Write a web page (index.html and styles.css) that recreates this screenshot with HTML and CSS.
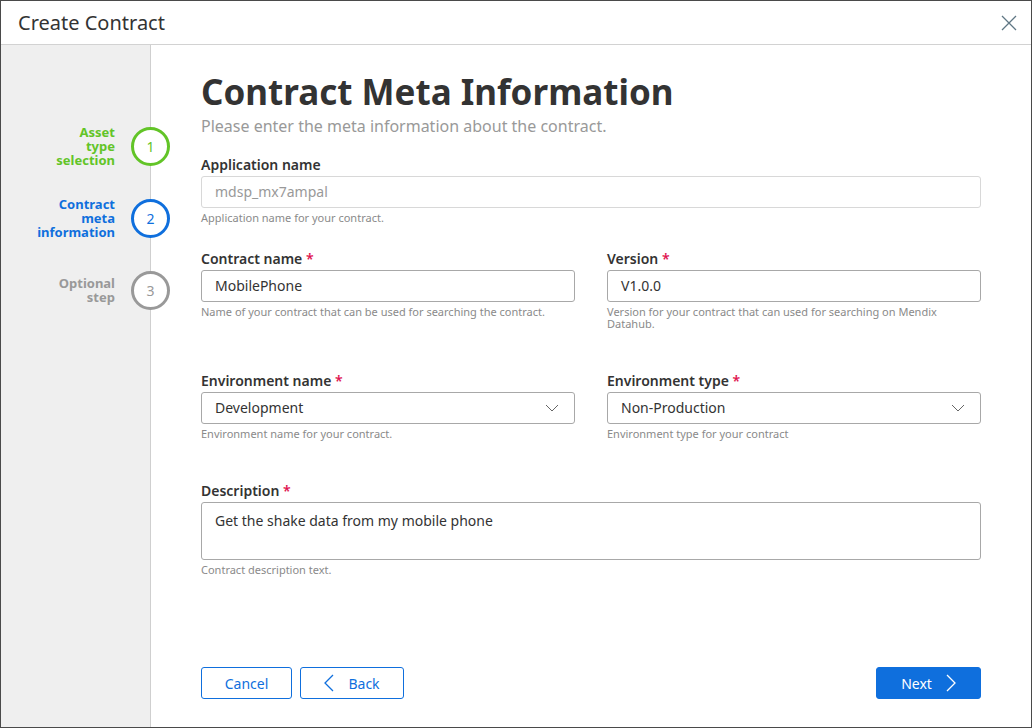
FILE: index.html
```html
<!DOCTYPE html>
<html lang="en">
<head>
<meta charset="utf-8">
<title>Create Contract</title>
<link rel="stylesheet" href="styles.css">
</head>
<body>
<div class="dialog">
  <div class="header">
    <div class="header-title">Create Contract</div>
    <svg class="close" width="16" height="16" viewBox="0 0 16 16"><path d="M1 1 L15 15 M15 1 L1 15" stroke="#5f7784" stroke-width="1.3" fill="none"/></svg>
  </div>
  <div class="body">
    <div class="sidebar">
      <div class="step done">
        <div class="step-label">Asset type selection</div>
        <div class="step-circle">1</div>
      </div>
      <div class="step active">
        <div class="step-label">Contract meta information</div>
        <div class="step-circle">2</div>
      </div>
      <div class="step todo">
        <div class="step-label">Optional step</div>
        <div class="step-circle">3</div>
      </div>
    </div>
    <div class="main">
      <h1 class="title">Contract Meta Information</h1>
      <p class="subtitle">Please enter the meta information about the contract.</p>

      <div class="field field-app">
        <label class="label">Application name</label>
        <div class="input disabled">mdsp_mx7ampal</div>
        <div class="help">Application name for your contract.</div>
      </div>

      <div class="row row-contract">
        <div class="field">
          <label class="label">Contract name <span class="req">*</span></label>
          <div class="input">MobilePhone</div>
          <div class="help">Name of your contract that can be used for searching the contract.</div>
        </div>
        <div class="field">
          <label class="label">Version <span class="req">*</span></label>
          <div class="input">V1.0.0</div>
          <div class="help">Version for your contract that can used for searching on Mendix Datahub.</div>
        </div>
      </div>

      <div class="row row-env">
        <div class="field">
          <label class="label">Environment name <span class="req">*</span></label>
          <div class="input select"><span>Development</span>
            <svg width="14" height="8" viewBox="0 0 14 8"><path d="M1 1 L7 7 L13 1" stroke="#666" stroke-width="1" fill="none"/></svg>
          </div>
          <div class="help">Environment name for your contract.</div>
        </div>
        <div class="field">
          <label class="label">Environment type <span class="req">*</span></label>
          <div class="input select"><span>Non-Production</span>
            <svg width="14" height="8" viewBox="0 0 14 8"><path d="M1 1 L7 7 L13 1" stroke="#666" stroke-width="1" fill="none"/></svg>
          </div>
          <div class="help">Environment type for your contract</div>
        </div>
      </div>

      <div class="field field-desc">
        <label class="label">Description <span class="req">*</span></label>
        <div class="input textarea">Get the shake data from my mobile phone</div>
        <div class="help">Contract description text.</div>
      </div>

      <div class="actions">
        <div class="left-actions">
          <button class="btn btn-outline btn-cancel">Cancel</button>
          <button class="btn btn-outline btn-back">
            <svg width="10" height="18" viewBox="0 0 10 18"><path d="M9 1 L1 9 L9 17" stroke="#0f6fdd" stroke-width="1.3" fill="none"/></svg>
            <span>Back</span>
          </button>
        </div>
        <button class="btn btn-primary btn-next">
          <span>Next</span>
          <svg width="10" height="18" viewBox="0 0 10 18"><path d="M1 1 L9 9 L1 17" stroke="#ffffff" stroke-width="1.3" fill="none"/></svg>
        </button>
      </div>
    </div>
  </div>
</div>
</body>
</html>
```

FILE: styles.css
```css
* { box-sizing: border-box; }
html, body { margin: 0; padding: 0; background: #fff; }
body { font-family: "Noto Sans", "Open Sans", sans-serif; color: #333; }

.dialog {
  width: 1032px;
  height: 728px;
  border: 1px solid #4a4a4a;
  display: flex;
  flex-direction: column;
  background: #fff;
}

.header {
  height: 44px;
  flex: 0 0 44px;
  border-bottom: 1px solid #d2d2d2;
  display: flex;
  align-items: center;
  justify-content: space-between;
  padding: 0 14px 0 17px;
}
.header-title { font-size: 20px; color: #333; font-weight: 400; }
.close { display: block; }

.body { flex: 1; display: flex; min-height: 0; }

.sidebar {
  width: 150px;
  flex: 0 0 150px;
  background: #efefef;
  border-right: 1px solid #cfcfcf;
  padding-top: 65px;
  display: flex;
  flex-direction: column;
}
.step {
  height: 72px;
  display: flex;
  align-items: center;
  justify-content: flex-end;
  margin-right: -20px;
  position: relative;
  z-index: 1;
}
.step-label {
  width: min-content;
  text-align: right;
  font-size: 13px;
  font-weight: 700;
  line-height: 14px;
  margin-right: 16px;
}
.step-circle {
  width: 39px;
  height: 39px;
  border-radius: 50%;
  border: 3px solid;
  background: #fff;
  display: flex;
  align-items: center;
  justify-content: center;
  font-size: 14px;
}
.step.done .step-label, .step.done .step-circle { color: #62c427; border-color: #62c427; }
.step.active .step-label, .step.active .step-circle { color: #0f6fdd; border-color: #0f6fdd; }
.step.todo .step-label, .step.todo .step-circle { color: #999; border-color: #999; }

.main {
  flex: 1;
  padding: 0 50px 28px 50px;
  display: flex;
  flex-direction: column;
}
.title {
  margin: 23px 0 0 0;
  font-size: 35px;
  font-weight: 700;
  line-height: 48px;
  color: #333;
}
.subtitle {
  margin: -1px 0 0 0;
  font-size: 16px;
  line-height: 22px;
  color: #999;
}

.field { display: flex; flex-direction: column; }
.field-app { margin-top: 19px; }
.label {
  font-size: 14px;
  font-weight: 600;
  line-height: 18px;
  color: #333;
  margin-bottom: 2px;
}
.req { color: #e0134f; }
.input {
  height: 32px;
  border: 1px solid #a8a8a8;
  border-radius: 3px;
  background: #fff;
  padding: 0 13px;
  font-size: 14px;
  line-height: 30px;
  color: #333;
}
.input.disabled { border-color: #d8d8d8; color: #999; }
.input.select { display: flex; align-items: center; justify-content: space-between; }
.input.select svg { margin-right: 2px; }
.input.textarea { height: 58px; line-height: 20px; padding-top: 8px; }
.help {
  font-size: 11px;
  line-height: 12px;
  color: #8a8a8a;
  margin-top: 4px;
}

.row { display: grid; grid-template-columns: 1fr 1fr; column-gap: 32px; }
.row-contract { margin-top: 26px; }
.row-env { margin-top: 42px; }
.field-desc { margin-top: 42px; }

.actions {
  margin-top: auto;
  display: flex;
  justify-content: space-between;
  align-items: center;
}
.left-actions { display: flex; gap: 8px; }
.btn {
  height: 32px;
  border-radius: 3px;
  font-family: inherit;
  font-size: 14px;
  display: flex;
  align-items: center;
  justify-content: center;
  gap: 14px;
  padding: 0;
  cursor: pointer;
}
.btn-outline { background: #fff; border: 1px solid #0f6fdd; color: #0f6fdd; }
.btn-primary { background: #0f6fdd; border: 1px solid #0f6fdd; color: #fff; }
.btn-cancel { width: 91px; }
.btn-back { width: 104px; }
.btn-next { width: 105px; }
```
